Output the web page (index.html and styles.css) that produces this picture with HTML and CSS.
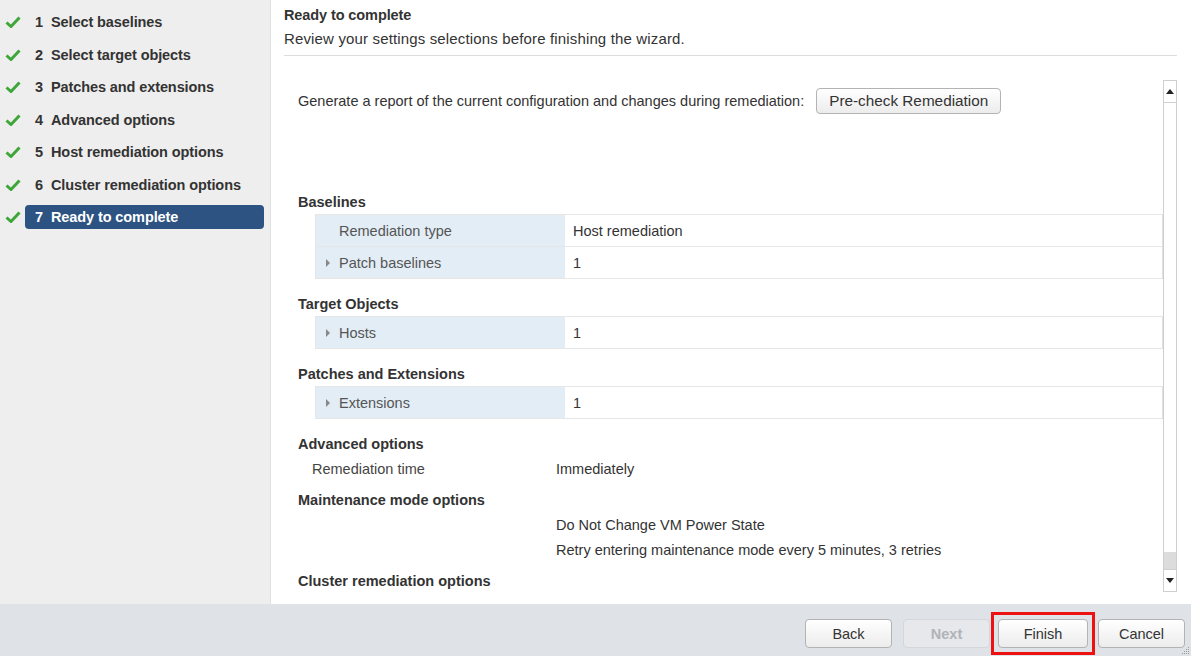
FILE: index.html
```html
<!DOCTYPE html>
<html lang="en">
<head>
    <meta charset="UTF-8">
    <title>Remediate - Ready to complete</title>
    <link rel="stylesheet" href="styles.css">
</head>
<body>

<div class="wizard">
    <div class="main">
        <ul class="steps">
            <li class="step"><span class="check"><svg width="16" height="12" viewBox="0 0 16 12"><path d="M1.5 6.5 L6 10.5 L14.5 1.5" fill="none" stroke="#3fa63a" stroke-width="3"/></svg></span><span class="step-label"><span class="num">1</span>Select baselines</span></li>
            <li class="step"><span class="check"><svg width="16" height="12" viewBox="0 0 16 12"><path d="M1.5 6.5 L6 10.5 L14.5 1.5" fill="none" stroke="#3fa63a" stroke-width="3"/></svg></span><span class="step-label"><span class="num">2</span>Select target objects</span></li>
            <li class="step"><span class="check"><svg width="16" height="12" viewBox="0 0 16 12"><path d="M1.5 6.5 L6 10.5 L14.5 1.5" fill="none" stroke="#3fa63a" stroke-width="3"/></svg></span><span class="step-label"><span class="num">3</span>Patches and extensions</span></li>
            <li class="step"><span class="check"><svg width="16" height="12" viewBox="0 0 16 12"><path d="M1.5 6.5 L6 10.5 L14.5 1.5" fill="none" stroke="#3fa63a" stroke-width="3"/></svg></span><span class="step-label"><span class="num">4</span>Advanced options</span></li>
            <li class="step"><span class="check"><svg width="16" height="12" viewBox="0 0 16 12"><path d="M1.5 6.5 L6 10.5 L14.5 1.5" fill="none" stroke="#3fa63a" stroke-width="3"/></svg></span><span class="step-label"><span class="num">5</span>Host remediation options</span></li>
            <li class="step"><span class="check"><svg width="16" height="12" viewBox="0 0 16 12"><path d="M1.5 6.5 L6 10.5 L14.5 1.5" fill="none" stroke="#3fa63a" stroke-width="3"/></svg></span><span class="step-label"><span class="num">6</span>Cluster remediation options</span></li>
            <li class="step active"><span class="check"><svg width="16" height="12" viewBox="0 0 16 12"><path d="M1.5 6.5 L6 10.5 L14.5 1.5" fill="none" stroke="#3fa63a" stroke-width="3"/></svg></span><span class="step-label"><span class="num">7</span>Ready to complete</span></li>
        </ul>

        <div class="panel">
            <div class="panel-header">
                <div class="title">Ready to complete</div>
                <div class="subtitle">Review your settings selections before finishing the wizard.</div>
            </div>

            <div class="panel-body">
                <div class="content">
                    <div class="intro">
                        <span>Generate a report of the current configuration and changes during remediation:</span>
                        <button class="btn">Pre-check Remediation</button>
                    </div>

                    <div class="section">
                        <h3>Baselines</h3>
                        <div class="grid">
                            <div class="row"><div class="key">Remediation type</div><div class="val">Host remediation</div></div>
                            <div class="row"><div class="key"><span class="arrow"></span>Patch baselines</div><div class="val">1</div></div>
                        </div>
                    </div>

                    <div class="section">
                        <h3>Target Objects</h3>
                        <div class="grid">
                            <div class="row"><div class="key"><span class="arrow"></span>Hosts</div><div class="val">1</div></div>
                        </div>
                    </div>

                    <div class="section">
                        <h3>Patches and Extensions</h3>
                        <div class="grid">
                            <div class="row"><div class="key"><span class="arrow"></span>Extensions</div><div class="val">1</div></div>
                        </div>
                    </div>

                    <div class="section">
                        <h3>Advanced options</h3>
                        <div class="kv"><span class="kv-key">Remediation time</span><span>Immediately</span></div>
                    </div>

                    <div class="section">
                        <h3>Maintenance mode options</h3>
                        <div class="kv"><span class="kv-key"></span><span>Do Not Change VM Power State</span></div>
                        <div class="kv"><span class="kv-key"></span><span>Retry entering maintenance mode every 5 minutes, 3 retries</span></div>
                    </div>

                    <div class="section">
                        <h3>Cluster remediation options</h3>
                    </div>
                </div>

                <div class="scrollbar">
                    <div class="sb-btn"><span class="tri-up"></span></div>
                    <div class="sb-track"><div class="sb-thumb"></div></div>
                    <div class="sb-btn bottom"><span class="tri-down"></span></div>
                </div>
            </div>
        </div>
    </div>

    <div class="footer">
        <button class="btn">Back</button>
        <button class="btn disabled">Next</button>
        <button class="btn highlight">Finish</button>
        <button class="btn">Cancel</button>
        <svg class="grip" width="10" height="10" viewBox="0 0 10 10">
            <rect x="8" y="2" width="1" height="1" fill="#999"/>
            <rect x="6" y="4" width="1" height="1" fill="#999"/>
            <rect x="8" y="4" width="1" height="1" fill="#999"/>
            <rect x="4" y="6" width="1" height="1" fill="#999"/>
            <rect x="6" y="6" width="1" height="1" fill="#999"/>
            <rect x="8" y="6" width="1" height="1" fill="#999"/>
            <rect x="2" y="8" width="1" height="1" fill="#999"/>
            <rect x="4" y="8" width="1" height="1" fill="#999"/>
            <rect x="6" y="8" width="1" height="1" fill="#999"/>
            <rect x="8" y="8" width="1" height="1" fill="#999"/>
        </svg>
    </div>
</div>

</body>
</html>
```

FILE: styles.css
```css
body {
    margin: 0;
    padding: 0;
    font-family: "Liberation Sans", Arial, sans-serif;
    font-size: 14.5px;
    color: #333;
}
.wizard {
    width: 1191px;
    height: 656px;
    display: flex;
    flex-direction: column;
    overflow: hidden;
}
.main {
    display: flex;
    height: 604px;
}

/* left step list */
.steps {
    list-style: none;
    margin: 0;
    padding: 6px 0 0 0;
    width: 270px;
    background: #eeeeee;
    border-right: 1px solid #e2e2e2;
}
.step {
    display: flex;
    align-items: center;
    height: 32.5px;
    font-weight: bold;
    letter-spacing: -0.1px;
}
.check {
    width: 25px;
    padding-left: 5px;
    box-sizing: border-box;
    display: flex;
    align-items: center;
}
.step-label {
    display: flex;
    align-items: center;
    width: 239px;
    height: 24px;
    padding-left: 10px;
    box-sizing: border-box;
    border-radius: 4px;
}
.num {
    width: 16px;
}
.step.active .step-label {
    background: #2c5381;
    color: white;
}

/* right panel */
.panel {
    flex: 1;
    background: white;
    padding: 0 14px 0 13px;
}
.panel-header {
    padding-top: 5px;
    padding-bottom: 6px;
    border-bottom: 1px solid #dddddd;
}
.title {
    font-weight: bold;
    line-height: 20px;
    letter-spacing: -0.1px;
}
.subtitle {
    font-size: 15px;
    letter-spacing: 0.15px;
    line-height: 20px;
    margin-top: 4px;
}
.panel-body {
    display: flex;
    margin-top: 24px;
    height: 512px;
}
.content {
    flex: 1;
    padding-left: 14px;
    overflow: hidden;
}
.intro {
    display: flex;
    align-items: center;
    gap: 12px;
    padding-top: 8px;
    margin-bottom: 67px;
}
.intro .btn {
    font-size: 15.3px;
    padding: 0 12px;
}
.section {
    padding-top: 11px;
}
.section h3 {
    margin: 0;
    font-size: 14.5px;
    line-height: 20px;
}
.grid {
    margin: 2px 0 4px 17px;
    border-top: 1px solid #e6e6e6;
    border-left: 1px solid #e6e6e6;
    border-right: 1px solid #e0e0e0;
}
.row {
    display: flex;
    height: 31px;
    border-bottom: 1px solid #e6e6e6;
}
.key {
    width: 249px;
    background: #e3edf5;
    padding-left: 23px;
    box-sizing: border-box;
    display: flex;
    align-items: center;
    color: #555;
    position: relative;
}
.val {
    flex: 1;
    padding-left: 8px;
    display: flex;
    align-items: center;
}
.arrow {
    position: absolute;
    left: 10px;
    top: 12px;
    border-left: 4px solid #888;
    border-top: 4px solid transparent;
    border-bottom: 4px solid transparent;
}
.kv {
    display: flex;
    padding-top: 5px;
    line-height: 20px;
}
.kv-key {
    width: 244px;
    padding-left: 14px;
    color: #444;
}

/* scrollbar */
.scrollbar {
    width: 12px;
    border: 1px solid #cfcfcf;
    display: flex;
    flex-direction: column;
    background: white;
}
.sb-btn {
    height: 21px;
    border-bottom: 1px solid #cfcfcf;
    display: flex;
    align-items: center;
    justify-content: center;
}
.sb-btn.bottom {
    border-bottom: none;
    border-top: 1px solid #cfcfcf;
}
.sb-track {
    flex: 1;
    display: flex;
    flex-direction: column;
    justify-content: flex-end;
}
.sb-thumb {
    height: 17px;
    background: #dcdcdc;
}
.tri-up {
    border-bottom: 5px solid #222;
    border-left: 4px solid transparent;
    border-right: 4px solid transparent;
}
.tri-down {
    border-top: 5px solid #222;
    border-left: 4px solid transparent;
    border-right: 4px solid transparent;
}

/* buttons */
.btn {
    font-family: "Liberation Sans", Arial, sans-serif;
    font-size: 14.5px;
    color: #333;
    height: 26px;
    padding: 0 12px;
    border: 1px solid #b3b3b3;
    border-radius: 4px;
    background: linear-gradient(#ffffff, #ececec);
}

/* footer */
.footer {
    flex: 1;
    background: #dfe2e6;
    display: flex;
    justify-content: flex-end;
    align-items: center;
    gap: 10px;
    padding-right: 6px;
    position: relative;
}
.footer .btn {
    width: 87px;
    height: 29px;
    margin-top: 7px;
}
.footer .btn.highlight {
    width: 90px;
    margin-left: -2px;
    position: relative;
}
.footer .btn.highlight::after {
    content: "";
    position: absolute;
    top: -8px;
    left: -8px;
    right: -8px;
    bottom: -8px;
    border: 3px solid #ee1111;
}
.footer .btn.disabled {
    color: #b0b3b8;
    font-weight: bold;
    border-color: #d3d6da;
    background: #e6e8eb;
    margin-left: 1px;
}
.grip {
    position: absolute;
    right: 1px;
    bottom: 1px;
}
```
